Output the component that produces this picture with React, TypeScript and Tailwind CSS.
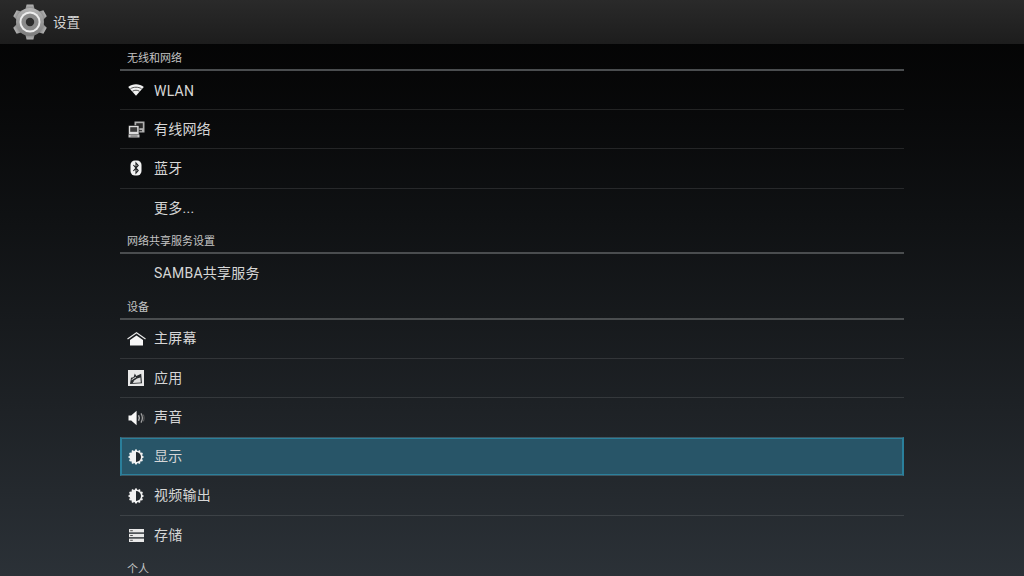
import type { ReactNode } from 'react';

const fontStack = "font-['Roboto','Noto_Sans_CJK_SC','Noto_Sans_CJK_JP',sans-serif]";

function GearIcon() {
  const teeth = [0, 60, 120, 180, 240, 300];
  return (
    <svg width="36" height="36" viewBox="0 0 36 36">
      <defs>
        <linearGradient id="gear" x1="0" y1="0" x2="0" y2="1">
          <stop offset="0" stopColor="#b4b4b4" />
          <stop offset="1" stopColor="#7c7c7c" />
        </linearGradient>
      </defs>
      {teeth.map((a) => (
        <path key={a} d="M13.2 6L14.6 0.6H21.4L22.8 6Z" fill="url(#gear)" transform={`rotate(${a} 18 18)`} />
      ))}
      <circle cx="18" cy="18" r="14" fill="url(#gear)" />
      <circle cx="18" cy="18" r="10.5" fill="#ececec" />
      <circle cx="18" cy="18" r="8.6" fill="#8a8a8a" />
      <circle cx="18" cy="18" r="4.2" fill="#2a2a2a" />
    </svg>
  );
}

function WifiIcon() {
  return (
    <svg width="16" height="12" viewBox="0 0 16 12">
      <path d="M8 11.8L0.2 3C4.6 -0.6 11.4 -0.6 15.8 3Z" fill="#f2f2f2" />
      <path d="M2.4 4.8C5.6 2.7 10.4 2.7 13.6 4.8" fill="none" stroke="#2a2a2a" strokeWidth="0.8" />
      <path d="M4.5 7.2C6.6 5.9 9.4 5.9 11.5 7.2" fill="none" stroke="#2a2a2a" strokeWidth="0.8" />
    </svg>
  );
}

function EthernetIcon() {
  return (
    <svg width="17" height="17" viewBox="0 0 17 17">
      <rect x="6.5" y="0.5" width="10" height="11" fill="#b0b0b0" />
      <rect x="8.2" y="2.2" width="6.6" height="5" fill="#2a2a2a" />
      <rect x="11" y="9" width="3" height="1.2" fill="#3c3c3c" />
      <rect x="0.5" y="4.5" width="10.5" height="9" fill="#dcdcdc" stroke="#141414" strokeWidth="0.6" />
      <rect x="2.2" y="6.2" width="7" height="4.6" fill="#3a3a3a" />
      <rect x="0.5" y="13.5" width="11" height="3" fill="#c8c8c8" />
      <rect x="2.5" y="14.6" width="7" height="0.9" fill="#5a5a5a" />
    </svg>
  );
}

function BluetoothIcon() {
  return (
    <svg width="12" height="16" viewBox="0 0 12 16">
      <rect x="0.5" y="0.5" width="11" height="15" rx="4.5" fill="#f2f2f2" />
      <path d="M3.4 5L8.2 10.6L6 13V3L8.2 5.4L3.4 11" fill="none" stroke="#1a1c1e" strokeWidth="1.1" />
    </svg>
  );
}

function HomeIcon() {
  return (
    <svg width="19" height="14" viewBox="0 0 19 14">
      <path d="M0.5 7L9.5 0.8L18.5 7" fill="none" stroke="#e8e8e8" strokeWidth="1.2" />
      <path d="M3 13.6V8L9.5 3.4L16 8V13.6Z" fill="#f6f6f6" />
    </svg>
  );
}

function AppsIcon() {
  return (
    <svg width="16" height="16" viewBox="0 0 16 16">
      <rect x="0" y="0" width="16" height="16" fill="#e8e8e8" />
      <path d="M2 14L3 7.8L5.6 7.2L6.8 3.4L8.2 6L13.2 3.8L14 13.2Z" fill="#282b2e" />
      <path d="M4.8 13L6.2 10.4L9 8.6L12.4 7.4L12.8 12.4Z" fill="#e0e0e0" />
      <path d="M3.6 9.8L8 7" stroke="#e8e8e8" strokeWidth="0.9" />
    </svg>
  );
}

function SoundIcon() {
  return (
    <svg width="17" height="16" viewBox="0 0 17 16" fill="none">
      <path d="M0.5 5.5H3.2L8.6 0.8V15.2L3.2 10.5H0.5Z" fill="#f8f8f8" />
      <path d="M10.6 5.2C11.5 7 11.5 9 10.6 10.8" stroke="#c4c4c4" strokeWidth="1.3" />
      <path d="M13 3.4C14.7 6.2 14.7 9.8 13 12.6" stroke="#a0a0a0" strokeWidth="1.3" />
      <path d="M15.4 4.6C16.3 6.6 16.3 9.4 15.4 11.4" stroke="#686868" strokeWidth="0.9" />
    </svg>
  );
}

function BrightnessIcon() {
  const rays = [0, 30, 60, 90, 120, 150, 180, 210, 240, 270, 300, 330];
  return (
    <svg width="16" height="16" viewBox="0 0 16 16">
      {rays.map((a) => (
        <circle key={a} cx="8" cy="1.4" r="1.1" fill="#f2f2f2" transform={`rotate(${a} 8 8)`} />
      ))}
      <circle cx="8" cy="8" r="6.5" fill="#f2f2f2" />
      <path d="M8 3A5 5 0 0 1 8 13Z" fill="#24292e" />
    </svg>
  );
}

function StorageIcon() {
  return (
    <svg width="15" height="13" viewBox="0 0 15 13">
      <rect x="0" y="0" width="15" height="3.4" fill="#e8e8e8" />
      <rect x="0" y="4.8" width="15" height="3.4" fill="#e8e8e8" />
      <rect x="0" y="9.6" width="15" height="3.4" fill="#e8e8e8" />
      <rect x="1.2" y="1.2" width="2.6" height="1" fill="#555" />
      <rect x="1.2" y="6" width="2.6" height="1" fill="#555" />
      <rect x="1.2" y="10.8" width="2.6" height="1" fill="#555" />
    </svg>
  );
}

function SectionHeader({ title, className }: { title: string; className: string }) {
  return (
    <div className={`flex flex-col justify-end ${className}`}>
      <div className="pl-[7px] pb-[3px] text-[11px] leading-[14px] text-[#c4c4c4]">{title}</div>
      <div className="h-[2px] bg-[#4a4d4f]" />
    </div>
  );
}

function Row({ icon, label, divider, selected, latin }: { icon?: ReactNode; label: string; divider?: boolean; selected?: boolean; latin?: boolean }) {
  return (
    <div
      className={`flex h-[39.2px] items-center ${
        selected
          ? 'border-x-2 border-y border-x-[#2a7f9b] border-y-[#3f5560] bg-[#285568] shadow-[inset_0_1px_0_#2a7f9b,inset_0_-1px_0_#2a7f9b]'
          : 'pl-[2px]'
      } ${divider ? 'border-b border-b-[#ffffff1c]' : ''}`}
    >
      <div className="flex w-[28px] shrink-0 items-center justify-center">{icon}</div>
      <span className={`ml-[4px] text-[14px] tracking-[0.25px] text-[#d6d6d6] ${latin ? 'translate-y-[1px]' : ''}`}>{label}</span>
    </div>
  );
}

export default function App() {
  return (
    <div className={`h-[576px] w-[1024px] overflow-hidden bg-gradient-to-b from-[#030303] to-[#2b3137] ${fontStack}`}>
      <header className="flex h-[44px] items-center bg-gradient-to-b from-[#2a2a2a] to-[#1d1d1d] pl-[12px]">
        <GearIcon />
        <span className="ml-[5px] text-[13.5px] text-[#d4d4d4]">设置</span>
      </header>

      <main className="mx-[120px] flex flex-col">
        <SectionHeader title="无线和网络" className="h-[27px]" />
        <Row icon={<WifiIcon />} label="WLAN" latin divider />
        <Row icon={<EthernetIcon />} label="有线网络" divider />
        <Row icon={<BluetoothIcon />} label="蓝牙" divider />
        <Row label="更多..." />
        <SectionHeader title="网络共享服务设置" className="h-[26.5px]" />
        <Row label="SAMBA共享服务" />
        <SectionHeader title="设备" className="h-[26.3px]" />
        <Row icon={<HomeIcon />} label="主屏幕" divider />
        <Row icon={<AppsIcon />} label="应用" divider />
        <Row icon={<SoundIcon />} label="声音" />
        <Row icon={<BrightnessIcon />} label="显示" selected />
        <Row icon={<BrightnessIcon />} label="视频输出" divider />
        <Row icon={<StorageIcon />} label="存储" />
        <div className="pl-[7px] pt-[8px] text-[11px] leading-[14px] text-[#c4c4c4]">个人</div>
      </main>
    </div>
  );
}
